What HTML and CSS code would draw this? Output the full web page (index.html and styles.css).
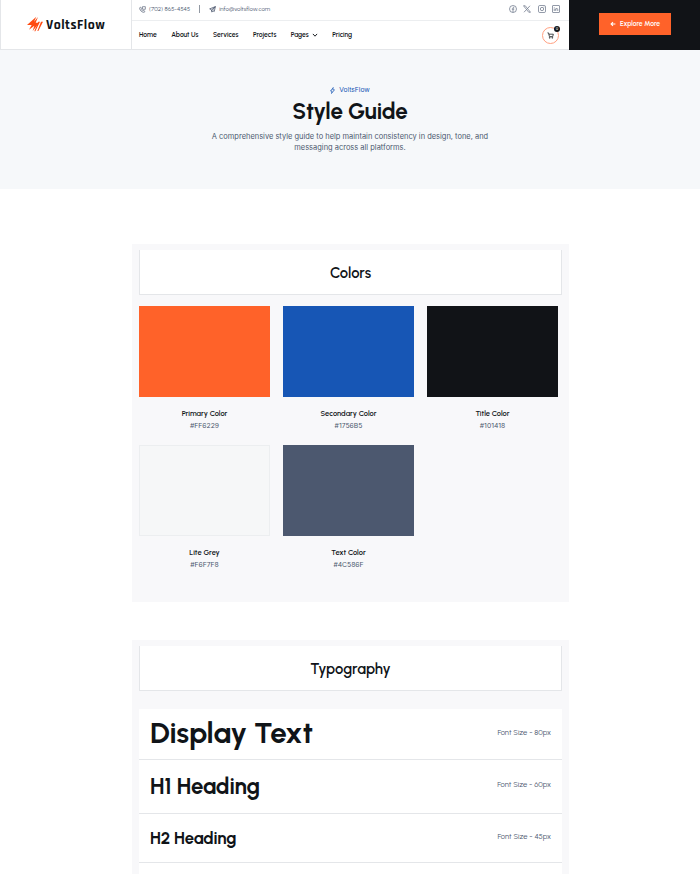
FILE: index.html
```html
<!DOCTYPE html>
<html lang="en">
<head>
    <meta charset="UTF-8">
    <meta name="viewport" content="width=device-width, initial-scale=1.0">
    <title>Style Guide - VoltsFlow</title>
    <link rel="stylesheet" href="styles.css">
</head>
<body>
    <header class="header">
        <a href="#" class="logo">
            <svg class="logo-icon" viewBox="0 0 48 48">
                <path d="M28 2 0 27h14L6 41 22 29 17 45 37 20H26L33 3 21 17Z"/>
                <path d="M39 17h-5L22 46h3ZM48 17h-6L31 45h3Z"/>
            </svg>
            <span>VoltsFlow</span>
        </a>
        <div class="header-main">
            <div class="top-bar">
                <ul class="contact">
                    <li>
                        <svg class="line-icon" viewBox="0 0 16 16"><path d="M4 2.5 1.5 4c-.5 5.5 5 11 10.5 10.5l1.5-2.5-3.5-2-1.5 1.5C6.8 10.5 5.5 9 4.8 7.5L6 6ZM8 1.5h6.5v6H8Z"/></svg>
                        <span class="phone">(702) 865-4545</span>
                    </li>
                    <li>
                        <svg class="line-icon plane" viewBox="0 0 16 16"><path d="M14.5 1.5 1.5 6.5l4 2.5 1 5 2.5-3 3 1.5ZM5.5 9l9-7.5L7 10.5"/></svg>
                        <span class="email">info@voltsflow.com</span>
                    </li>
                </ul>
                <div class="social">
                    <svg class="line-icon" viewBox="0 0 16 16"><circle cx="8" cy="8" r="7"/><path d="M8 14.5V6q0-2 2.5-1.7M5.5 8.2h5"/></svg>
                    <svg class="line-icon" viewBox="0 0 16 16"><path d="M1 1.5h3.5L15 14.5h-3.5ZM14 1.5 9 7.2M7 9 2 14.5"/></svg>
                    <svg class="line-icon" viewBox="0 0 16 16"><rect x="1" y="1" width="14" height="14" rx="2.5"/><circle cx="8" cy="8" r="3.3"/><path d="M12 3.3v1.4"/></svg>
                    <svg class="line-icon" viewBox="0 0 16 16"><rect x="1" y="1" width="14" height="14" rx="1"/><path d="M4.5 7v5M4.5 4v1.3M7.5 12V7M7.5 9q0-2 2-2t2 2v3"/></svg>
                </div>
            </div>
            <div class="nav-bar">
                <ul class="nav">
                    <li>Home</li>
                    <li>About Us</li>
                    <li>Services</li>
                    <li>Projects</li>
                    <li>Pages <svg class="chevron" viewBox="0 0 10 10"><path d="M1.5 3.2 5 7l3.5-3.8"/></svg></li>
                    <li>Pricing</li>
                </ul>
                <a href="#" class="cart">
                    <svg viewBox="0 0 16 16"><path d="M1 2h2.5l2 8.5h7.5L14.5 5H4.3"/><circle cx="6.3" cy="13.3" r="1"/><circle cx="12" cy="13.3" r="1"/></svg>
                    <span class="cart-count">0</span>
                </a>
            </div>
        </div>
        <div class="header-cta">
            <a href="#" class="button">
                <svg viewBox="0 0 10 10"><path d="M9 5H2M5 1.8 1.8 5 5 8.2"/></svg>
                <span>Explore More</span>
            </a>
        </div>
    </header>

    <section class="hero">
        <p class="subtitle">
            <svg viewBox="0 0 10 14"><path d="M6.5 1 1 8h3L3 13l6-7.5H5.5Z"/></svg>
            <span>VoltsFlow</span>
        </p>
        <h1>Style Guide</h1>
        <p class="intro">A comprehensive style guide to help maintain consistency in design, tone, and<br>messaging across all platforms.</p>
    </section>

    <section class="panel colors">
        <h2 class="panel-title">Colors</h2>
        <div class="color-grid">
            <div class="color">
                <div class="swatch primary"></div>
                <h3>Primary Color</h3>
                <p>#FF6229</p>
            </div>
            <div class="color">
                <div class="swatch secondary"></div>
                <h3>Secondary Color</h3>
                <p>#1756B5</p>
            </div>
            <div class="color">
                <div class="swatch title"></div>
                <h3>Title Color</h3>
                <p>#101418</p>
            </div>
            <div class="color">
                <div class="swatch grey"></div>
                <h3>Lite Grey</h3>
                <p>#F6F7F8</p>
            </div>
            <div class="color">
                <div class="swatch text"></div>
                <h3>Text Color</h3>
                <p>#4C586F</p>
            </div>
        </div>
    </section>

    <section class="panel typography">
        <h2 class="panel-title">Typography</h2>
        <ul class="type-list">
            <li class="display"><span class="sample">Display Text</span><span class="size">Font Size - 80px</span></li>
            <li class="h1"><span class="sample">H1 Heading</span><span class="size">Font Size - 60px</span></li>
            <li class="h2"><span class="sample">H2 Heading</span><span class="size">Font Size - 45px</span></li>
            <li class="h3"></li>
        </ul>
    </section>
</body>
</html>
```
FILE: styles.css
```css
:root{
    --primary : #ff6229;
    --secondary : #1756b5;
    --title : #101418;
    --grey : #f6f7f8;
    --text : #4c586f;
    --line : #e4e6e9;
    --panel : #f8f8fa;
    --heading-font : Urbanist, Lato, sans-serif;
}

*{
    padding: 0;
    margin: 0;
    box-sizing: border-box;
}

ul{
    list-style: none;
}

a{
    text-decoration: none;
    color: inherit;
}

svg{
    display: block;
    flex: none;
    fill: none;
    stroke: currentColor;
}

body{
    height: 874px;
    overflow: hidden;
    background: #fff;
    color: var(--text);
    font-family: Inter, sans-serif;
    font-size: 7px;
}

/* header */
.header{
    display: grid;
    grid-template-columns: 131px 438px 131px;
    height: 50px;
}

.logo{
    display: flex;
    align-items: center;
    gap: 3px;
    padding: 0 0 1px 27px;
    border-left: 1px solid var(--line);
    border-bottom: 1px solid var(--line);
    color: var(--title);
    font-family: Rajdhani, Roboto, sans-serif;
    font-size: 13.8px;
    font-weight: 700;
    letter-spacing: 0.5px;
}

.logo span{
    padding-top: 1px;
}

.logo-icon{
    width: 16px;
    height: 16px;
    margin-left: -1px;
    fill: #ff4b12;
    stroke: none;
}

.header-main{
    border-left: 1px solid var(--line);
    border-bottom: 1px solid var(--line);
}

.top-bar{
    display: flex;
    align-items: center;
    justify-content: space-between;
    height: 21px;
    padding: 0 9px 2px 7px;
    border-bottom: 1px solid #eceef0;
}

.contact{
    display: flex;
    font-family: var(--heading-font);
    font-size: 6.05px;
}

.contact li{
    display: flex;
    align-items: center;
    gap: 3px;
}

.contact li + li{
    margin-left: 9px;
    padding-left: 9px;
    border-left: 1px solid #9299a3;
}

.line-icon{
    width: 7px;
    height: 7px;
    stroke-width: 1.4;
}

.plane{
    stroke-width: 1.8;
}

.social{
    display: flex;
    gap: 6.5px;
}

.social .line-icon{
    width: 8px;
    height: 8px;
    stroke-width: 1.2;
}

.nav-bar{
    display: flex;
    align-items: center;
    justify-content: space-between;
    height: 28px;
    padding: 0 10px 0 7px;
    color: var(--title);
}

.nav{
    display: flex;
    gap: 14.5px;
    font-family: var(--heading-font);
    font-size: 6.73px;
    font-weight: 600;
}

.nav li{
    display: flex;
    align-items: center;
    gap: 3px;
}

.chevron{
    width: 6px;
    height: 6px;
    stroke-width: 1.6;
}

.cart{
    position: relative;
    display: flex;
    align-items: center;
    justify-content: center;
    width: 17px;
    height: 17px;
    border: 1px solid #ff9f80;
    border-radius: 50%;
}

.cart svg{
    width: 7px;
    height: 7px;
    stroke-width: 1.7;
}

.cart-count{
    position: absolute;
    top: -2px;
    right: -2px;
    width: 6px;
    height: 6px;
    border-radius: 50%;
    background: var(--title);
    color: #fff;
    font-size: 4px;
    line-height: 6px;
    text-align: center;
}

.header-cta{
    display: flex;
    justify-content: center;
    padding: 13px 0 0 1px;
    background: #111317;
}

.button{
    display: flex;
    align-items: center;
    justify-content: center;
    gap: 4px;
    width: 72px;
    height: 22px;
    background: var(--primary);
    color: #fff;
    font-family: var(--heading-font);
    font-size: 6.8px;
    font-weight: 600;
}

.button svg{
    width: 6px;
    height: 6px;
    stroke-width: 1.8;
}

/* hero */
.hero{
    height: 139px;
    padding-top: 35px;
    background: #f6f8fa;
    text-align: center;
}

.subtitle{
    display: flex;
    align-items: center;
    justify-content: center;
    gap: 4px;
    line-height: 10px;
    color: var(--secondary);
    font-size: 6.7px;
}

.subtitle svg{
    width: 5px;
    height: 7px;
    stroke-width: 1.4;
}

.hero h1{
    color: var(--title);
    font-family: var(--heading-font);
    font-size: 22.4px;
    font-weight: 700;
    line-height: 34px;
    letter-spacing: -0.15px;
}

.intro{
    margin-top: 2px;
    font-size: 7.47px;
    line-height: 11px;
}

/* panels */
.panel{
    width: 437px;
    margin-left: 132px;
    padding: 6px 7px 0;
    background: var(--panel);
}

.panel-title{
    height: 45px;
    border: 1px solid var(--line);
    border-top: 0;
    background: #fff;
    color: var(--title);
    font-family: var(--heading-font);
    font-size: 14.8px;
    font-weight: 600;
    line-height: 47px;
    text-align: center;
}

.colors{
    height: 358px;
    margin-top: 55px;
}

.color-grid{
    display: grid;
    grid-template-columns: repeat(3, 131px);
    grid-auto-rows: 139px;
    column-gap: 13px;
    margin-top: 11px;
}

.color{
    text-align: center;
}

.swatch{
    height: 91px;
    margin-bottom: 11px;
}

.color h3{
    color: var(--title);
    font-family: var(--heading-font);
    font-size: 7.5px;
    font-weight: 600;
    line-height: 12px;
}

.color p{
    font-size: 6.8px;
    line-height: 12px;
}

.primary{
    background: var(--primary);
}

.secondary{
    background: var(--secondary);
}

.title{
    background: #111317;
}

.grey{
    border: 1px solid #eceef0;
    background: var(--grey);
}

.text{
    background: var(--text);
}

/* typography */
.typography{
    height: 234px;
    margin-top: 38px;
}

.type-list{
    margin-top: 18px;
}

.type-list li{
    display: flex;
    align-items: center;
    justify-content: space-between;
    padding: 0 11px;
    border-bottom: 1px solid var(--line);
    background: #fff;
    font-family: var(--heading-font);
}

.sample{
    color: var(--title);
    font-weight: 700;
    letter-spacing: -0.15px;
}

.size{
    font-size: 7.55px;
}

.type-list .display{
    height: 51px;
    padding-bottom: 3px;
}

.type-list .h1{
    height: 54px;
}

.type-list .h2{
    height: 49px;
}

.type-list .h3{
    height: 40px;
}

.h1 .size,
.h2 .size{
    padding-bottom: 4px;
}

.display .sample{
    font-size: 29.6px;
}

.h1 .sample{
    font-size: 22.2px;
}

.h2 .sample{
    font-size: 16.7px;
}
```
